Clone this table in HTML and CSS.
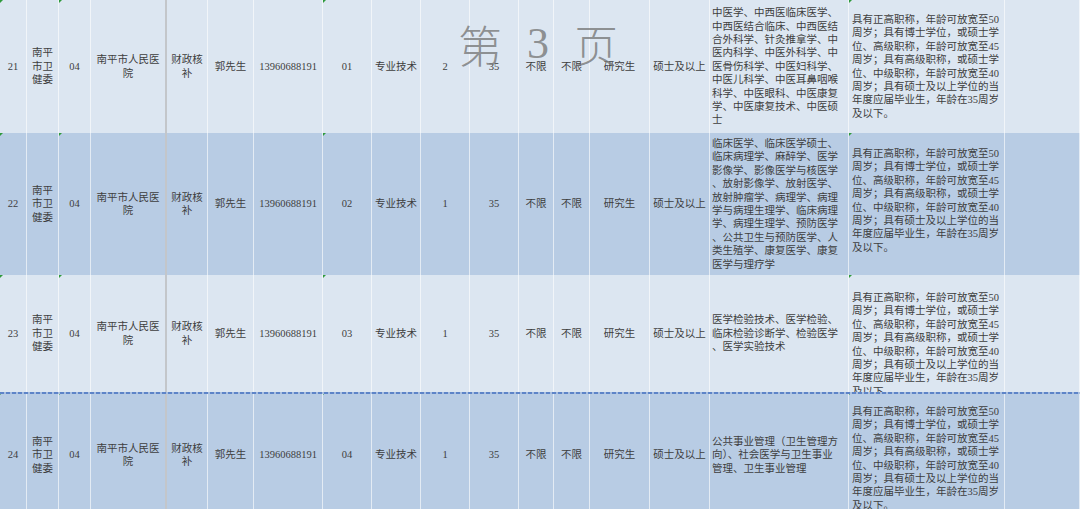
FILE: index.html
```html
<!DOCTYPE html>
<html lang="zh-CN">
<head>
<meta charset="utf-8">
<title>第3页</title>
<link rel="stylesheet" href="styles.css">
</head>
<body>
<div class="sheet">
  <div class="row r1 light">
    <div class="c tri">21</div>
    <div class="c">南平<br>市卫<br>健委</div>
    <div class="c tri">04</div>
    <div class="c brk">南平市人民医<br>院</div>
    <div class="c">财政核<br>补</div>
    <div class="c">郭先生</div>
    <div class="c">13960688191</div>
    <div class="c tri">01</div>
    <div class="c">专业技术</div>
    <div class="c">2</div>
    <div class="c">35</div>
    <div class="c">不限</div>
    <div class="c">不限</div>
    <div class="c">研究生</div>
    <div class="c">硕士及以上</div>
    <div class="c major">中医学、中西医临床医学、<br>中西医结合临床、中西医结<br>合外科学、针灸推拿学、中<br>医内科学、中医外科学、中<br>医骨伤科学、中医妇科学、<br>中医儿科学、中医耳鼻咽喉<br>科学、中医眼科、中医康复<br>学、中医康复技术、中医硕<br>士</div>
    <div class="c req tri">具有正高职称，年龄可放宽至50<br>周岁；具有博士学位，或硕士学<br>位、高级职称，年龄可放宽至45<br>周岁；具有高级职称，或硕士学<br>位、中级职称，年龄可放宽至40<br>周岁；具有硕士及以上学位的当<br>年度应届毕业生，年龄在35周岁<br>及以下。</div>
    <div class="c"></div>
  </div>
  <div class="row r2 dark">
    <div class="c tri">22</div>
    <div class="c">南平<br>市卫<br>健委</div>
    <div class="c tri">04</div>
    <div class="c brk">南平市人民医<br>院</div>
    <div class="c">财政核<br>补</div>
    <div class="c">郭先生</div>
    <div class="c">13960688191</div>
    <div class="c tri">02</div>
    <div class="c">专业技术</div>
    <div class="c">1</div>
    <div class="c">35</div>
    <div class="c">不限</div>
    <div class="c">不限</div>
    <div class="c">研究生</div>
    <div class="c">硕士及以上</div>
    <div class="c major">临床医学、临床医学硕士、<br>临床病理学、麻醉学、医学<br>影像学、影像医学与核医学<br>、放射影像学、放射医学、<br>放射肿瘤学、病理学、病理<br>学与病理生理学、临床病理<br>学、病理生理学、预防医学<br>、公共卫生与预防医学、人<br>类生殖学、康复医学、康复<br>医学与理疗学</div>
    <div class="c req tri">具有正高职称，年龄可放宽至50<br>周岁；具有博士学位，或硕士学<br>位、高级职称，年龄可放宽至45<br>周岁；具有高级职称，或硕士学<br>位、中级职称，年龄可放宽至40<br>周岁；具有硕士及以上学位的当<br>年度应届毕业生，年龄在35周岁<br>及以下。</div>
    <div class="c"></div>
  </div>
  <div class="row r3 light">
    <div class="c tri">23</div>
    <div class="c">南平<br>市卫<br>健委</div>
    <div class="c tri">04</div>
    <div class="c brk">南平市人民医<br>院</div>
    <div class="c">财政核<br>补</div>
    <div class="c">郭先生</div>
    <div class="c">13960688191</div>
    <div class="c tri">03</div>
    <div class="c">专业技术</div>
    <div class="c">1</div>
    <div class="c">35</div>
    <div class="c">不限</div>
    <div class="c">不限</div>
    <div class="c">研究生</div>
    <div class="c">硕士及以上</div>
    <div class="c major">医学检验技术、医学检验、<br>临床检验诊断学、检验医学<br>、医学实验技术</div>
    <div class="c req tri">具有正高职称，年龄可放宽至50<br>周岁；具有博士学位，或硕士学<br>位、高级职称，年龄可放宽至45<br>周岁；具有高级职称，或硕士学<br>位、中级职称，年龄可放宽至40<br>周岁；具有硕士及以上学位的当<br>年度应届毕业生，年龄在35周岁<br>及以下。</div>
    <div class="c"></div>
  </div>
  <div class="row r4 dark">
    <div class="c tri">24</div>
    <div class="c">南平<br>市卫<br>健委</div>
    <div class="c tri">04</div>
    <div class="c brk">南平市人民医<br>院</div>
    <div class="c">财政核<br>补</div>
    <div class="c">郭先生</div>
    <div class="c">13960688191</div>
    <div class="c tri">04</div>
    <div class="c">专业技术</div>
    <div class="c">1</div>
    <div class="c">35</div>
    <div class="c">不限</div>
    <div class="c">不限</div>
    <div class="c">研究生</div>
    <div class="c">硕士及以上</div>
    <div class="c major">公共事业管理（卫生管理方<br>向）、社会医学与卫生事业<br>管理、卫生事业管理</div>
    <div class="c req tri">具有正高职称，年龄可放宽至50<br>周岁；具有博士学位，或硕士学<br>位、高级职称，年龄可放宽至45<br>周岁；具有高级职称，或硕士学<br>位、中级职称，年龄可放宽至40<br>周岁；具有硕士及以上学位的当<br>年度应届毕业生，年龄在35周岁<br>及以下。</div>
    <div class="c"></div>
  </div>
  <div class="watermark"><span>第</span><span class="num">3</span><span>页</span></div>
</div>
</body>
</html>
```

FILE: styles.css
```css
* { box-sizing: border-box; }
html, body {
  margin: 0;
  padding: 0;
  width: 1080px;
  height: 509px;
  overflow: hidden;
  background: #dce6f1;
}
.sheet {
  position: relative;
  width: 1080px;
  font-family: "Liberation Serif", "Noto Sans CJK SC", serif;
  font-size: 10.5px;
  line-height: 13.4px;
  color: #3e3e3e;
}
.row {
  display: grid;
  grid-template-columns: 27px 32px 32px 76px 41px 46px 69px 49px 49px 49px 49px 35px 36px 60px 60px 139px 156px 75px;
  position: relative;
}
.light { background: #dce6f1; }
.dark { background: #b8cce4; }
.r1 { height: 133px; }
.r2 { height: 142px; }
.r3 { height: 117px; }
.r4 { height: 126px; }
.r4::before {
  content: "";
  position: absolute;
  left: 0;
  right: 0;
  top: 0;
  height: 2px;
  background: repeating-linear-gradient(90deg, #5d84c8 0 4px, #a9bfe0 4px 6px);
  z-index: 2;
}
.c {
  position: relative;
  display: flex;
  align-items: center;
  justify-content: center;
  text-align: center;
  white-space: nowrap;
  overflow: hidden;
  border-right: 1px solid rgba(255, 255, 255, 0.6);
}
.c.brk {
  border-right: 2px solid #c3c6ca;
}
.c.major {
  justify-content: flex-start;
  text-align: left;
  padding-left: 2px;
}
.c.req {
  align-items: flex-start;
  justify-content: flex-start;
  text-align: left;
  padding-left: 3px;
  padding-top: 13px;
}
.r2 .c.req { padding-top: 14px; }
.r3 .c.req { padding-top: 16px; }
.c.tri::after {
  content: "";
  position: absolute;
  left: 0;
  top: 0;
  width: 0;
  height: 0;
  border-top: 3px solid #2f9a3c;
  border-right: 3px solid transparent;
}
.watermark {
  position: absolute;
  left: 458px;
  top: 22px;
  display: flex;
  gap: 25px;
  font-family: "Noto Sans CJK SC", sans-serif;
  font-weight: 300;
  font-size: 44px;
  line-height: 44px;
  color: rgba(120, 120, 120, 0.8);
  pointer-events: none;
  z-index: 3;
}
.watermark .num {
  font-family: "Liberation Serif", serif;
}
```
